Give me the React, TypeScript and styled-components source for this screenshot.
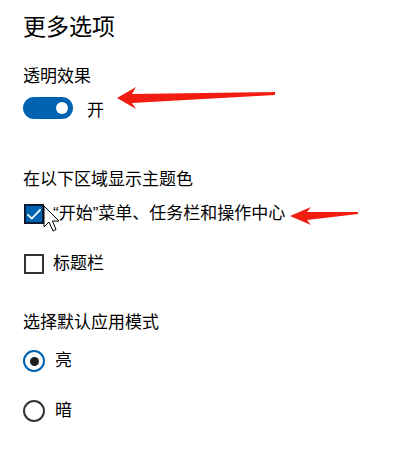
import React from 'react';
import styled, { createGlobalStyle } from 'styled-components';

const GlobalStyle = createGlobalStyle`
  html, body {
    margin: 0;
    padding: 0;
    background: #ffffff;
  }
  body {
    font-family: 'Liberation Sans', 'Noto Sans CJK SC', sans-serif;
    color: #000000;
  }
`;

const Page = styled.div`
  position: relative;
  width: 406px;
  height: 453px;
  box-sizing: border-box;
  padding: 12px 0 0 23px;
  overflow: hidden;
`;

const Title = styled.h1`
  margin: 0;
  font-size: 23px;
  font-weight: 400;
  line-height: 30px;
  color: #000000;
`;

const SectionLabel = styled.div<{ $top: number }>`
  margin-top: ${(p) => p.$top}px;
  font-size: 17px;
  line-height: 24px;
  color: #000000;
`;

const ToggleRow = styled.label`
  display: flex;
  align-items: center;
  gap: 14px;
  height: 22px;
  margin-top: 8px;
  font-size: 17px;
  cursor: pointer;
`;

const Track = styled.span<{ $on: boolean }>`
  display: flex;
  align-items: center;
  justify-content: ${(p) => (p.$on ? 'flex-end' : 'flex-start')};
  box-sizing: border-box;
  width: 50px;
  height: 22px;
  padding: 0 5px;
  border-radius: 11px;
  background-color: ${(p) => (p.$on ? '#0063b1' : '#ffffff')};
  border: ${(p) => (p.$on ? 'none' : '2px solid #333333')};
`;

const Knob = styled.span<{ $on: boolean }>`
  width: 12px;
  height: 12px;
  border-radius: 50%;
  background-color: ${(p) => (p.$on ? '#ffffff' : '#333333')};
`;

const OptionRow = styled.label<{ $top: number }>`
  display: flex;
  align-items: center;
  gap: 9px;
  height: 24px;
  margin-top: ${(p) => p.$top}px;
  padding-left: 1px;
  font-size: 17px;
  line-height: 24px;
  cursor: pointer;
`;

const RadioRow = styled(OptionRow)`
  padding-left: 0;
  gap: 10px;
`;

const Box = styled.span<{ $checked: boolean }>`
  display: flex;
  align-items: center;
  justify-content: center;
  box-sizing: border-box;
  width: 20px;
  height: 20px;
  flex-shrink: 0;
  border: 2px solid ${(p) => (p.$checked ? '#0b1a33' : '#333333')};
  background-color: ${(p) => (p.$checked ? '#0063b1' : '#ffffff')};

  svg {
    display: block;
    width: 16px;
    height: 16px;
  }
`;

const Circle = styled.span<{ $checked: boolean }>`
  display: flex;
  align-items: center;
  justify-content: center;
  box-sizing: border-box;
  width: 22px;
  height: 22px;
  flex-shrink: 0;
  border-radius: 50%;
  border: ${(p) => (p.$checked ? '2.5px solid #0063b1' : '2px solid #333333')};
  background-color: #ffffff;
`;

const Dot = styled.span`
  width: 9px;
  height: 9px;
  border-radius: 50%;
  background-color: #1e1e1e;
`;

const Annotations = styled.svg`
  position: absolute;
  top: 0;
  left: 0;
  width: 406px;
  height: 453px;
  pointer-events: none;
`;

type CheckProps = { label: string; checked: boolean; top: number };

const Checkbox: React.FC<CheckProps> = ({ label, checked, top }) => (
  <OptionRow $top={top}>
    <Box $checked={checked}>
      {checked && (
        <svg viewBox='0 0 16 16'>
          <path d='M1.5 8.4 L5.8 12.6 L14.6 3.4' fill='none' stroke='#ffffff' strokeWidth='1.7' />
        </svg>
      )}
    </Box>
    <span>{label}</span>
  </OptionRow>
);

const Radio: React.FC<CheckProps> = ({ label, checked, top }) => (
  <RadioRow $top={top}>
    <Circle $checked={checked}>{checked && <Dot />}</Circle>
    <span>{label}</span>
  </RadioRow>
);

const App: React.FC = () => {
  return (
    <>
      <GlobalStyle />
      <Page>
        <Title>更多选项</Title>

        <SectionLabel $top={23}>透明效果</SectionLabel>
        <ToggleRow>
          <Track $on>
            <Knob $on />
          </Track>
          <span>开</span>
        </ToggleRow>

        <SectionLabel $top={49}>在以下区域显示主题色</SectionLabel>
        <Checkbox top={10} checked label='“开始”菜单、任务栏和操作中心' />
        <Checkbox top={26} checked={false} label='标题栏' />

        <SectionLabel $top={35}>选择默认应用模式</SectionLabel>
        <Radio top={14} checked label='亮' />
        <Radio top={26} checked={false} label='暗' />

        <Annotations viewBox='0 0 406 453'>
          <polygon
            fill='#f21c10'
            points='117,98 136,87 132,94 275,92 275,95 132,103 136,109'
          />
          <polygon
            fill='#f21c10'
            points='290,216 311,207 307,212 358,212 358,214 307,220 311,225'
          />
          <path
            d='M44 206 L44 227 L49 222 L53 231 L56 229.5 L52.5 221 L59 221 Z'
            fill='#ffffff'
            stroke='#000000'
            strokeWidth='1'
            strokeLinejoin='round'
          />
        </Annotations>
      </Page>
    </>
  );
};

export default App;
